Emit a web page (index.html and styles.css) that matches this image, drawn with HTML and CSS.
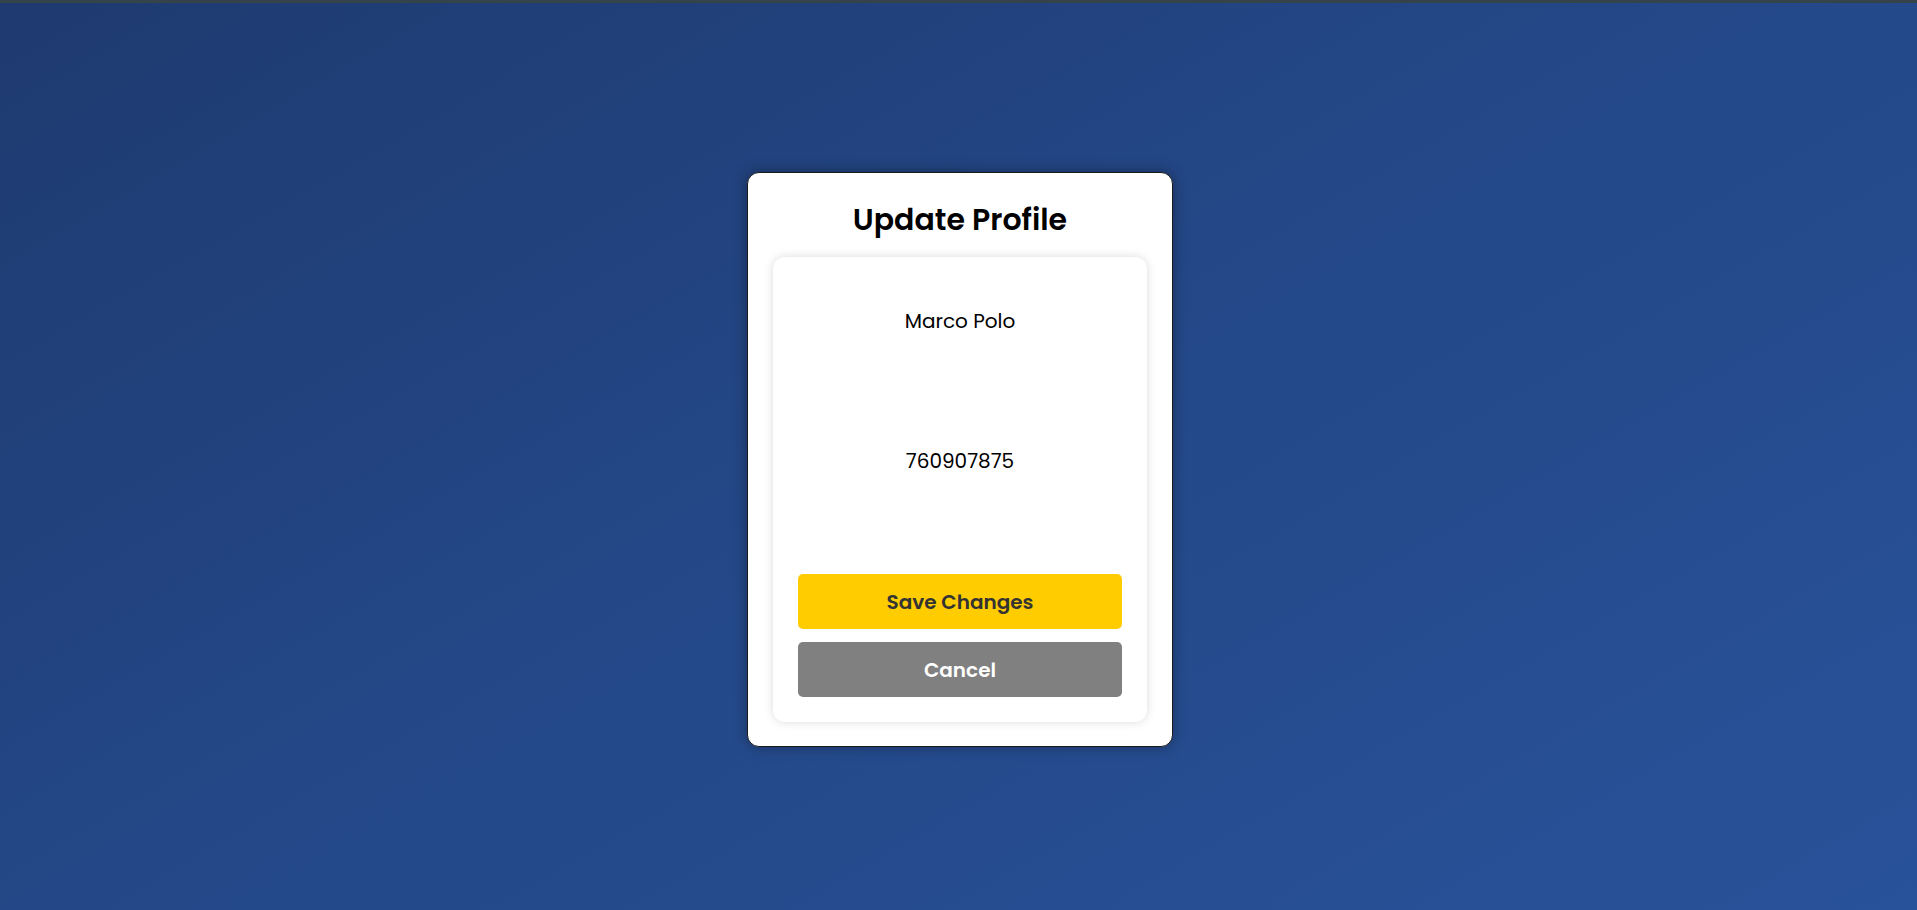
FILE: index.html
```html
<!DOCTYPE html>
<html lang="en">
<head>
<meta charset="utf-8">
<title>Update Profile</title>
<link rel="stylesheet" href="styles.css">
</head>
<body>
<div class="topbar"></div>
<main class="stage">
  <section class="card">
    <h1 class="title">Update Profile</h1>
    <div class="panel">
      <div class="field field-name">Marco Polo</div>
      <div class="field field-phone">760907875</div>
      <div class="actions">
        <button class="btn btn-save">Save Changes</button>
        <button class="btn btn-cancel">Cancel</button>
      </div>
    </div>
  </section>
</main>
</body>
</html>
```
FILE: styles.css
```css
html, body {
  margin: 0;
  padding: 0;
  height: 100%;
}
body {
  font-family: "Poppins", "Open Sans", "Noto Sans", sans-serif;
  background: linear-gradient(150deg, #1e3a70 0%, #244888 50%, #28529a 100%);
  display: flex;
  flex-direction: column;
  overflow: hidden;
}
.topbar {
  height: 3px;
  background: #34444a;
  flex: none;
}
.stage {
  flex: 1;
  display: flex;
  justify-content: center;
  padding-top: 169px;
  padding-left: 3px;
}
.card {
  box-sizing: border-box;
  width: 426px;
  height: 575px;
  background: #fff;
  border: 1px solid #1a1a1a;
  border-radius: 12px;
  box-shadow: 0 0 14px rgba(0, 0, 0, 0.35);
  padding: 28px 25px 24px;
  display: flex;
  flex-direction: column;
}
.title {
  margin: 0;
  height: 56px;
  text-align: center;
  font-size: 30px;
  font-weight: 600;
  line-height: 38px;
  color: #000;
}
.panel {
  flex: 1;
  background: #fff;
  border-radius: 12px;
  box-shadow: 0 0 10px rgba(0, 0, 0, 0.15);
  padding: 25px;
  display: flex;
  flex-direction: column;
}
.field {
  height: 78px;
  display: flex;
  align-items: center;
  justify-content: center;
  font-size: 20px;
  color: #000;
}
.field-phone {
  margin-top: 62px;
}
.actions {
  margin-top: 74px;
  display: flex;
  flex-direction: column;
  gap: 13px;
}
.btn {
  height: 55px;
  border: none;
  border-radius: 5px;
  font-family: inherit;
  font-size: 20px;
  font-weight: 600;
  cursor: pointer;
}
.btn-save {
  background: #ffcc00;
  color: #333;
}
.btn-cancel {
  background: #808080;
  color: #fff;
}
```
